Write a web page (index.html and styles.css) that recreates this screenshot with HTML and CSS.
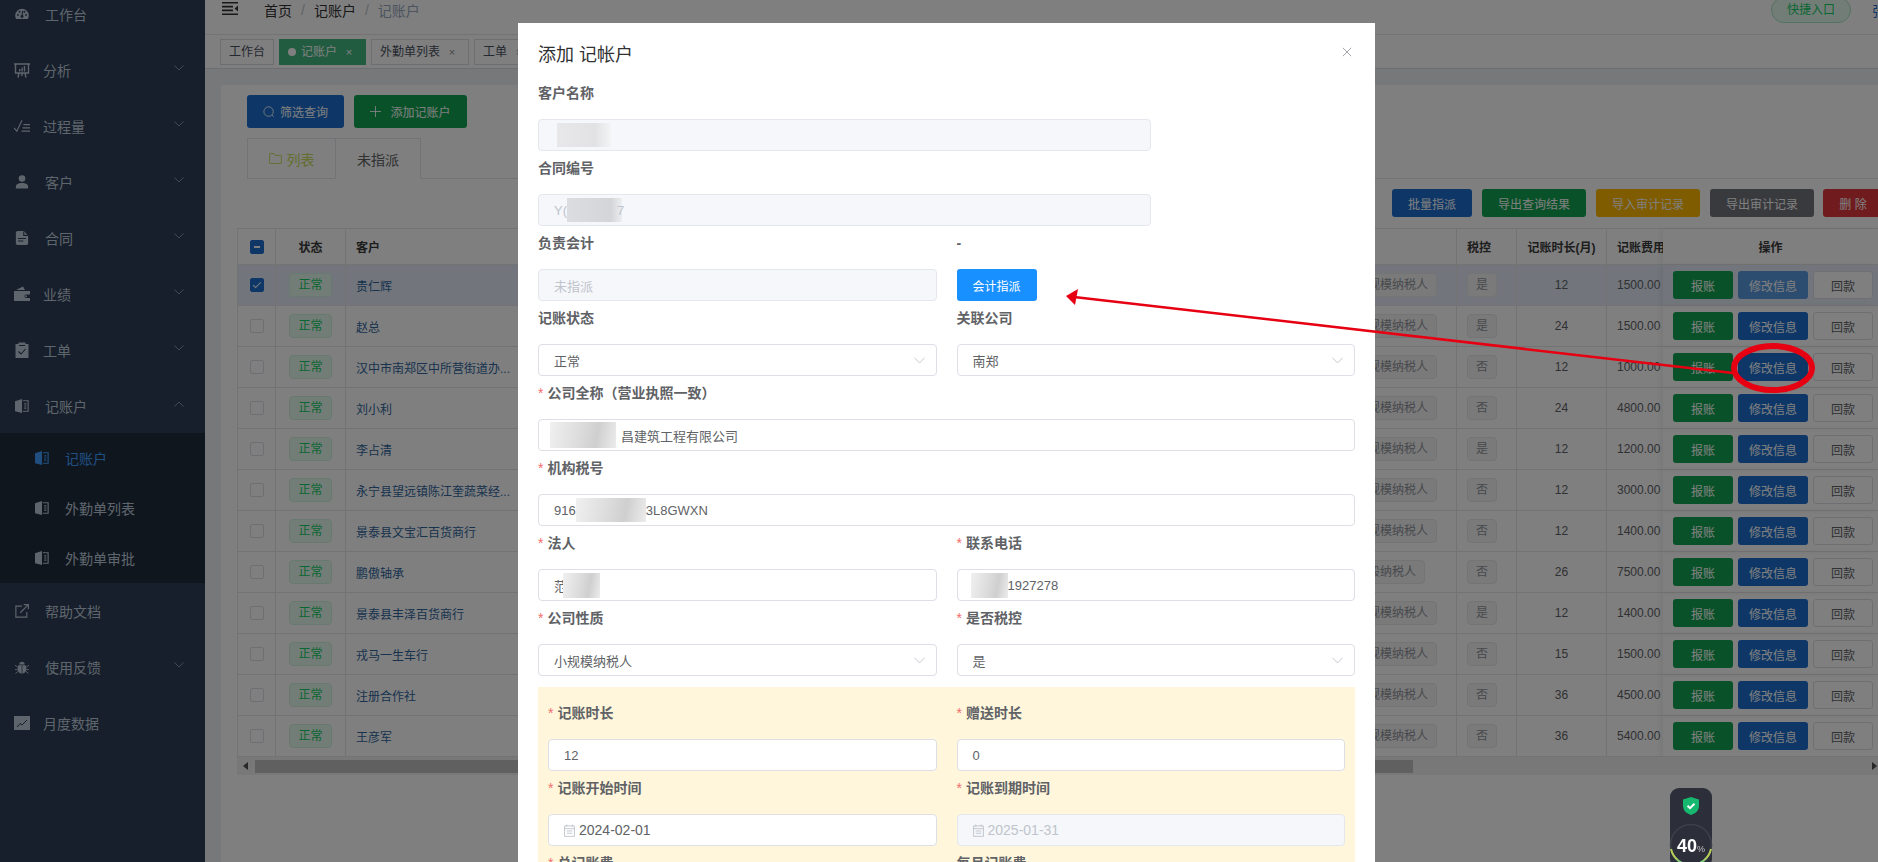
FILE: index.html
```html
<!DOCTYPE html>
<html lang="en">

<head>
    <meta charset="UTF-8">
    <meta name="viewport" content="width=device-width, initial-scale=1.0">
    <title>记账户</title>
    <link rel="stylesheet" href="styles.css">
</head>

<body>

    <!-- Sidebar icons -->
    <svg class="icon-defs" width="0" height="0">
        <symbol id="i-dash" viewBox="0 0 16 16">
            <path fill="currentColor" d="M8 2a7.8 7.8 0 0 0-7.8 7.8c0 1.5.4 2.8 1.1 4h13.4c.7-1.2 1.1-2.5 1.1-4A7.8 7.8 0 0 0 8 2z" />
            <g fill="#2d3e56"><circle cx="3.4" cy="9" r="1.1" /><circle cx="5.2" cy="5.4" r="1.1" /><circle cx="10.8" cy="5.4" r="1.1" /><circle cx="12.6" cy="9" r="1.1" /><circle cx="8" cy="10.8" r="1.7" /></g>
            <path stroke="#2d3e56" stroke-width="1.2" d="M8 10.5 8.8 4.5" />
        </symbol>
        <symbol id="i-board" viewBox="0 0 16 16">
            <g fill="none" stroke="currentColor" stroke-width="1.4"><path d="M0 2h16M1.5 2v9h13V2M5 11l-1 4.5M11 11l1 4.5M8 11v3" /></g>
            <path fill="currentColor" d="M5 7h1.4v2.5H5zM7.4 5.5h1.4v4H7.4zM9.8 4h1.4v5.500H9.8z" />
        </symbol>
        <symbol id="i-check" viewBox="0 1 17 14">
            <path fill="none" stroke="currentColor" stroke-width="1.2" d="M0 10l3 3.500L8.500 2M10 6.500h7M9 10h8M8 13.500h9" />
        </symbol>
        <symbol id="i-user" viewBox="0 0 16 16">
            <circle fill="currentColor" cx="8" cy="4" r="3.800" />
            <path fill="currentColor" d="M1 15.500v-2.500c0-2.500 3-4 7-4s7 1.500 7 4v2.500z" />
        </symbol>
        <symbol id="i-doc" viewBox="0 0 16 16">
            <path fill="currentColor" d="M1 2a2 2 0 0 1 2-2h7l5 5v9a2 2 0 0 1-2 2H3a2 2 0 0 1-2-2z" />
            <path fill="none" stroke="#2d3e56" stroke-width="1.2" d="M3.500 8.500h9M3.500 11.500h6M10 .5V5h5" />
        </symbol>
        <symbol id="i-wallet" viewBox="0 0 16 16">
            <path fill="currentColor" d="M0 5h16v3.500h-4.500a2 2 0 0 0 0 3.500H16V15H0zM2 4l7-3.500L11 4z" />
            <circle fill="currentColor" cx="12" cy="10.300" r="1" />
        </symbol>
        <symbol id="i-clip" viewBox="0 0 16 16">
            <path fill="currentColor" d="M1.500 2h3V.5h7V2h3v14h-13z" />
            <path fill="none" stroke="#2d3e56" stroke-width="1.100" d="M4.500 9.500l2.500 2.500 4.500-5M5 3.500h6" />
        </symbol>
        <symbol id="i-book" viewBox="0 0 16 16">
            <path fill="currentColor" d="M0 2.500 8 0v16l-8-2z" />
            <path fill="none" stroke="currentColor" stroke-width="1.300" d="M9 2h6v12H9M10.500 5.500H13M10.500 8H13M10.500 10.500H13" />
        </symbol>
        <symbol id="i-link" viewBox="0 0 16 16">
            <path fill="none" stroke="currentColor" stroke-width="1.300" d="M8 2.500H1v12.500h12.500V9M6 10 15 1M10 .7h5.300V6" />
        </symbol>
        <symbol id="i-bug" viewBox="0 0 16 16">
            <path fill="currentColor" d="M4 6h8c.8 1 1 2.500 1 4 0 3-2 5.500-5 5.500S3 13 3 10c0-1.500.2-3 1-4zM5 5a3 3 0 0 1 6 0z" />
            <path fill="none" stroke="currentColor" stroke-width="1" d="M0 6l3 2M16 6l-3 2M0 11h3M16 11h-3M.5 15.500 3.500 13M15.500 15.500 12.500 13" />
            <path stroke="#2d3e56" stroke-width=".8" d="M8 6v9.500" />
        </symbol>
        <symbol id="i-chart" viewBox="0 0 16 16">
            <path fill="currentColor" d="M0 1h16v14H0z" />
            <path fill="none" stroke="#2d3e56" stroke-width="1" d="M3 12l3-3.500 2 1.500 5-5" />
        </symbol>
    </svg>

    <div class="app">
        <aside class="sidebar">
            <a class="menu-item"><svg class="menu-icon"><use href="#i-dash" /></svg>工作台</a>
            <a class="menu-item tight"><svg class="menu-icon"><use href="#i-board" /></svg>分析<svg class="chev" viewBox="0 0 10 6"><path d="M.5.5 5 5 9.500.5" /></svg></a>
            <a class="menu-item tight"><svg class="menu-icon"><use href="#i-check" /></svg>过程量<svg class="chev" viewBox="0 0 10 6"><path d="M.5.5 5 5 9.500.5" /></svg></a>
            <a class="menu-item"><svg class="menu-icon"><use href="#i-user" /></svg>客户<svg class="chev" viewBox="0 0 10 6"><path d="M.5.5 5 5 9.500.5" /></svg></a>
            <a class="menu-item"><svg class="menu-icon"><use href="#i-doc" /></svg>合同<svg class="chev" viewBox="0 0 10 6"><path d="M.5.5 5 5 9.500.5" /></svg></a>
            <a class="menu-item tight"><svg class="menu-icon"><use href="#i-wallet" /></svg>业绩<svg class="chev" viewBox="0 0 10 6"><path d="M.5.5 5 5 9.500.5" /></svg></a>
            <a class="menu-item tight"><svg class="menu-icon"><use href="#i-clip" /></svg>工单<svg class="chev" viewBox="0 0 10 6"><path d="M.5.5 5 5 9.500.5" /></svg></a>
            <a class="menu-item"><svg class="menu-icon"><use href="#i-book" /></svg>记账户<svg class="chev" viewBox="0 0 10 6"><path d="M.5 5.500 5 1l4.500 4.500" /></svg></a>
            <div class="submenu">
                <a class="sub-item active"><svg class="menu-icon"><use href="#i-book" /></svg>记账户</a>
                <a class="sub-item"><svg class="menu-icon"><use href="#i-book" /></svg>外勤单列表</a>
                <a class="sub-item"><svg class="menu-icon"><use href="#i-book" /></svg>外勤单审批</a>
            </div>
            <a class="menu-item"><svg class="menu-icon"><use href="#i-link" /></svg>帮助文档</a>
            <a class="menu-item"><svg class="menu-icon"><use href="#i-bug" /></svg>使用反馈<svg class="chev" viewBox="0 0 10 6"><path d="M.5.5 5 5 9.500.5" /></svg></a>
            <a class="menu-item tight"><svg class="menu-icon"><use href="#i-chart" /></svg>月度数据</a>
        </aside>

        <div class="main">
            <header class="navbar">
                <svg class="fold" viewBox="0 0 16 13"><path d="M0 0h16v1.600H0zM0 11.400h16V13H0zM0 3.800h11v1.600H0zM0 7.600h11v1.600H0zM16 3.600v5.800l-3.500-2.900z" /></svg>
                <span class="crumb">首页</span><span class="crumb-sep">/</span>
                <span class="crumb">记账户</span><span class="crumb-sep">/</span>
                <span class="crumb last">记账户</span>
                <span class="quick">快捷入口</span>
                <span class="user-name">张</span>
            </header>

            <div class="tags-bar">
                <span class="tag-view">工作台</span>
                <span class="tag-view current"><i class="dot"></i>记账户<em>×</em></span>
                <span class="tag-view">外勤单列表<em>×</em></span>
                <span class="tag-view">工单<em>×</em></span>
            </div>

            <div class="content">
                <div class="card">
                    <div class="top-btns">
                        <button class="btn blue search"><svg viewBox="0 0 14 14"><circle cx="6.500" cy="6.500" r="5.500" /><path d="M10.500 10.500 12.500 12.500" /></svg>筛选查询</button>
                        <button class="btn green add"><svg viewBox="0 0 12 12"><path d="M6 0v12M0 6h12" /></svg>添加记账户</button>
                    </div>

                    <div class="tabs">
                        <span class="tab list"><svg viewBox="0 0 14 12"><path d="M.6 11.400V.6h4.500l1.500 2h6.800v8.800z" /></svg>列表</span>
                        <span class="tab current">未指派</span>
                    </div>

                    <div class="toolbar">
                        <button class="btn blue">批量指派</button>
                        <button class="btn green">导出查询结果</button>
                        <button class="btn yellow">导入审计记录</button>
                        <button class="btn gray">导出审计记录</button>
                        <button class="btn red">删 除</button>
                    </div>

                    <table class="grid">
                        <colgroup>
                            <col class="c-check"><col class="c-state"><col class="c-name"><col class="c-other">
                            <col class="c-type"><col class="c-tax"><col class="c-months"><col class="c-fee"><col class="c-ops">
                        </colgroup>
                        <thead>
                            <tr>
                                <th class="center"><span class="box mixed"></span></th>
                                <th class="center">状态</th>
                                <th>客户</th>
                                <th></th>
                                <th></th>
                                <th>税控</th>
                                <th class="center">记账时长(月)</th>
                                <th class="fee">记账费用</th>
                                <th class="ops center">操作</th>
                            </tr>
                        </thead>
                        <tbody>
                            <tr class="selected">
                                <td class="center"><span class="box checked"></span></td><td class="center"><span class="tag ok">正常</span></td><td class="name">贵仁辉</td><td></td>
                                <td><span class="tag">小规模纳税人</span></td><td><span class="tag">是</span></td><td class="center">12</td><td class="fee">1500.00</td>
                                <td class="ops"><div class="ops-row"><button class="mini green">报账</button><button class="mini blue focus">修改信息</button><button class="mini plain">回款</button></div></td>
                            </tr>
                            <tr>
                                <td class="center"><span class="box"></span></td><td class="center"><span class="tag ok">正常</span></td><td class="name">赵总</td><td></td>
                                <td><span class="tag">小规模纳税人</span></td><td><span class="tag">是</span></td><td class="center">24</td><td class="fee">1500.00</td>
                                <td class="ops"><div class="ops-row"><button class="mini green">报账</button><button class="mini blue">修改信息</button><button class="mini plain">回款</button></div></td>
                            </tr>
                            <tr>
                                <td class="center"><span class="box"></span></td><td class="center"><span class="tag ok">正常</span></td><td class="name">汉中市南郑区中所营街道办...</td><td></td>
                                <td><span class="tag">小规模纳税人</span></td><td><span class="tag">否</span></td><td class="center">12</td><td class="fee">1000.00</td>
                                <td class="ops"><div class="ops-row"><button class="mini green">报账</button><button class="mini blue">修改信息</button><button class="mini plain">回款</button></div></td>
                            </tr>
                            <tr>
                                <td class="center"><span class="box"></span></td><td class="center"><span class="tag ok">正常</span></td><td class="name">刘小利</td><td></td>
                                <td><span class="tag">小规模纳税人</span></td><td><span class="tag">否</span></td><td class="center">24</td><td class="fee">4800.00</td>
                                <td class="ops"><div class="ops-row"><button class="mini green">报账</button><button class="mini blue">修改信息</button><button class="mini plain">回款</button></div></td>
                            </tr>
                            <tr>
                                <td class="center"><span class="box"></span></td><td class="center"><span class="tag ok">正常</span></td><td class="name">李占清</td><td></td>
                                <td><span class="tag">小规模纳税人</span></td><td><span class="tag">是</span></td><td class="center">12</td><td class="fee">1200.00</td>
                                <td class="ops"><div class="ops-row"><button class="mini green">报账</button><button class="mini blue">修改信息</button><button class="mini plain">回款</button></div></td>
                            </tr>
                            <tr>
                                <td class="center"><span class="box"></span></td><td class="center"><span class="tag ok">正常</span></td><td class="name">永宁县望远镇陈江奎蔬菜经...</td><td></td>
                                <td><span class="tag">小规模纳税人</span></td><td><span class="tag">否</span></td><td class="center">12</td><td class="fee">3000.00</td>
                                <td class="ops"><div class="ops-row"><button class="mini green">报账</button><button class="mini blue">修改信息</button><button class="mini plain">回款</button></div></td>
                            </tr>
                            <tr>
                                <td class="center"><span class="box"></span></td><td class="center"><span class="tag ok">正常</span></td><td class="name">景泰县文宝汇百货商行</td><td></td>
                                <td><span class="tag">小规模纳税人</span></td><td><span class="tag">否</span></td><td class="center">12</td><td class="fee">1400.00</td>
                                <td class="ops"><div class="ops-row"><button class="mini green">报账</button><button class="mini blue">修改信息</button><button class="mini plain">回款</button></div></td>
                            </tr>
                            <tr>
                                <td class="center"><span class="box"></span></td><td class="center"><span class="tag ok">正常</span></td><td class="name">鹏傲轴承</td><td></td>
                                <td><span class="tag">一般纳税人</span></td><td><span class="tag">否</span></td><td class="center">26</td><td class="fee">7500.00</td>
                                <td class="ops"><div class="ops-row"><button class="mini green">报账</button><button class="mini blue">修改信息</button><button class="mini plain">回款</button></div></td>
                            </tr>
                            <tr>
                                <td class="center"><span class="box"></span></td><td class="center"><span class="tag ok">正常</span></td><td class="name">景泰县丰泽百货商行</td><td></td>
                                <td><span class="tag">小规模纳税人</span></td><td><span class="tag">是</span></td><td class="center">12</td><td class="fee">1400.00</td>
                                <td class="ops"><div class="ops-row"><button class="mini green">报账</button><button class="mini blue">修改信息</button><button class="mini plain">回款</button></div></td>
                            </tr>
                            <tr>
                                <td class="center"><span class="box"></span></td><td class="center"><span class="tag ok">正常</span></td><td class="name">戎马一生车行</td><td></td>
                                <td><span class="tag">小规模纳税人</span></td><td><span class="tag">否</span></td><td class="center">15</td><td class="fee">1500.00</td>
                                <td class="ops"><div class="ops-row"><button class="mini green">报账</button><button class="mini blue">修改信息</button><button class="mini plain">回款</button></div></td>
                            </tr>
                            <tr>
                                <td class="center"><span class="box"></span></td><td class="center"><span class="tag ok">正常</span></td><td class="name">注册合作社</td><td></td>
                                <td><span class="tag">小规模纳税人</span></td><td><span class="tag">否</span></td><td class="center">36</td><td class="fee">4500.00</td>
                                <td class="ops"><div class="ops-row"><button class="mini green">报账</button><button class="mini blue">修改信息</button><button class="mini plain">回款</button></div></td>
                            </tr>
                            <tr>
                                <td class="center"><span class="box"></span></td><td class="center"><span class="tag ok">正常</span></td><td class="name">王彦军</td><td></td>
                                <td><span class="tag">小规模纳税人</span></td><td><span class="tag">否</span></td><td class="center">36</td><td class="fee">5400.00</td>
                                <td class="ops"><div class="ops-row"><button class="mini green">报账</button><button class="mini blue">修改信息</button><button class="mini plain">回款</button></div></td>
                            </tr>
                        </tbody>
                    </table>

                    <div class="scrollbar">
                        <i class="arrow left"></i>
                        <div class="thumb"></div>
                        <i class="arrow right"></i>
                    </div>
                </div>
            </div>
        </div>
    </div>

    <!-- Dialog layer -->
    <div class="mask"></div>

    <div class="dialog">
        <div class="dialog-title">添加 记帐户</div>
        <svg class="dialog-close" viewBox="0 0 12 12"><path d="M1 1l10 10M11 1 1 11" /></svg>

        <div class="field wide">
            <label>客户名称</label>
            <div class="input disabled"><span class="blur b-name"></span></div>
        </div>
        <div class="field wide">
            <label>合同编号</label>
            <div class="input disabled">Y(<span class="blur b-contract"></span>7</div>
        </div>

        <div class="form-row">
            <div class="field">
                <label>负责会计</label>
                <div class="input disabled">未指派</div>
            </div>
            <div class="field">
                <label>-</label>
                <button class="assign">会计指派</button>
            </div>
            <div class="field">
                <label>记账状态</label>
                <div class="input select">正常<svg class="caret" viewBox="0 0 12 7"><path d="M.5.5 6 6.200 11.500.5" /></svg></div>
            </div>
            <div class="field">
                <label>关联公司</label>
                <div class="input select">南郑<svg class="caret" viewBox="0 0 12 7"><path d="M.5.5 6 6.200 11.500.5" /></svg></div>
            </div>
        </div>

        <div class="field">
            <label class="req">公司全称（营业执照一致）</label>
            <div class="input"><span class="blur b-company"></span>昌建筑工程有限公司</div>
        </div>
        <div class="field">
            <label class="req">机构税号</label>
            <div class="input">916<span class="blur b-taxno"></span>3L8GWXN</div>
        </div>

        <div class="form-row">
            <div class="field">
                <label class="req">法人</label>
                <div class="input">范<span class="blur b-person"></span></div>
            </div>
            <div class="field">
                <label class="req">联系电话</label>
                <div class="input"><span class="blur b-phone"></span>1927278</div>
            </div>
            <div class="field">
                <label class="req">公司性质</label>
                <div class="input select">小规模纳税人<svg class="caret" viewBox="0 0 12 7"><path d="M.5.5 6 6.200 11.500.5" /></svg></div>
            </div>
            <div class="field">
                <label class="req">是否税控</label>
                <div class="input select">是<svg class="caret" viewBox="0 0 12 7"><path d="M.5.5 6 6.200 11.500.5" /></svg></div>
            </div>
        </div>

        <div class="fee-box">
            <div class="form-row">
                <div class="field">
                    <label class="req">记账时长</label>
                    <div class="input">12</div>
                </div>
                <div class="field">
                    <label class="req">赠送时长</label>
                    <div class="input">0</div>
                </div>
                <div class="field">
                    <label class="req">记账开始时间</label>
                    <div class="input date"><svg class="cal" viewBox="0 0 12 14"><path d="M.6 2h10.800v11.400H.6zM3 .5V3M9 .5V3M.6 5h10.800M3 7.500h6M3 10h6" /></svg>2024-02-01</div>
                </div>
                <div class="field">
                    <label class="req">记账到期时间</label>
                    <div class="input date disabled"><svg class="cal" viewBox="0 0 12 14"><path d="M.6 2h10.800v11.400H.6zM3 .5V3M9 .5V3M.6 5h10.800M3 7.500h6M3 10h6" /></svg>2025-01-31</div>
                </div>
                <div class="field">
                    <label class="req">总记账费</label>
                </div>
                <div class="field">
                    <label>每月记账费</label>
                </div>
            </div>
        </div>
    </div>

    <!-- Red annotation drawn over the screenshot -->
    <svg class="annotation" viewBox="0 0 1878 862">
        <path d="M1733 373 1074 297" stroke="#e60012" stroke-width="2.500" fill="none" />
        <path d="M1066 296 1078 289 1075 305z" fill="#e60012" />
        <ellipse cx="1773" cy="368" rx="39" ry="22" stroke="#e60012" stroke-width="6" fill="none" />
    </svg>

    <!-- Floating security widget -->
    <div class="widget">
        <svg class="shield" viewBox="0 0 16 18">
            <path fill="#16b86f" d="M8 0 16 2.500V9c0 4.500-3.500 7.500-8 9-4.500-1.500-8-4.500-8-9V2.500z" />
            <path fill="none" stroke="#fff" stroke-width="2" d="M4.500 8.800 7 11.200 11.500 6.800" />
        </svg>
        <div class="gauge">
            <svg viewBox="0 0 44 44">
                <defs>
                    <linearGradient id="gaugeArc" x1="0" y1="0" x2="0" y2="1">
                        <stop offset="0.55" stop-color="#b7cf5a" />
                        <stop offset="1" stop-color="#3fc6a0" />
                    </linearGradient>
                </defs>
                <circle cx="22" cy="22" r="20.500" fill="none" stroke="#3d3f49" stroke-width="1.500" />
                <path d="M2 26A20.500 20.500 0 0 0 42 26" fill="none" stroke="url(#gaugeArc)" stroke-width="2" />
            </svg>
            <span class="gauge-text">40<small>%</small></span>
        </div>
    </div>

</body>

</html>
```

FILE: styles.css
```css
* {
    margin: 0;
    padding: 0;
    box-sizing: border-box;
}

body {
    height: 862px;
    overflow: hidden;
    font-family: "Liberation Sans", "Noto Sans CJK SC", sans-serif;
    font-size: 14px;
    color: #606266;
    background-color: #fff;
}

.icon-defs {
    position: absolute;
}

button {
    font-family: inherit;
    border: 0;
}

/* page is scrolled a little in the shot, so everything starts above the top edge */
.app {
    display: flex;
    height: 876px;
    margin-top: -14px;
}

/* Sidebar */
.sidebar {
    flex: none;
    width: 205px;
    background-color: #2d3e56;
    color: #bfcbd9;
}

.menu-item {
    display: flex;
    align-items: center;
    height: 56px;
    padding-left: 15px;
}

.menu-icon {
    flex: none;
    width: 14px;
    height: 14px;
    margin-right: 16px;
}

.menu-item.tight .menu-icon {
    width: 16px;
    height: 16px;
    margin-left: -1px;
    margin-right: 13px;
}

.chev {
    width: 10px;
    height: 6px;
    margin: -4px 21px 0 auto;
    fill: none;
    stroke: #8793a3;
    stroke-width: 1;
}

.submenu {
    margin-top: -1px;
    background-color: #1f2d3d;
}

.sub-item {
    display: flex;
    align-items: center;
    height: 50px;
    padding-left: 35px;
}

.sub-item.active {
    color: #409eff;
}

/* Main column */
.main {
    flex: 1;
    min-width: 0;
    overflow: hidden;
}

.navbar {
    display: flex;
    align-items: center;
    height: 49px;
    padding-left: 17px;
    border-bottom: 1px solid #e6e6e6;
}

.fold {
    width: 16px;
    height: 13px;
    margin: -4px 26px 0 0;
    fill: #303133;
}

.crumb {
    color: #303133;
}

.crumb.last {
    color: #97a8be;
}

.crumb-sep {
    margin: 0 9px;
    color: #c0c4cc;
}

.quick {
    width: 80px;
    height: 26px;
    margin: 0 21px 0 auto;
    border: 1px solid #a5e6c3;
    border-radius: 13px;
    background-color: #e7faf0;
    color: #13ce66;
    font-size: 12px;
    line-height: 24px;
    text-align: center;
}

.user-name {
    flex: none;
    width: 6px;
    overflow: hidden;
    color: #1c6fd0;
}

.tags-bar {
    display: flex;
    gap: 5px;
    height: 34px;
    padding: 4px 0 0 15px;
    border-bottom: 1px solid #d8dce5;
}

.tag-view {
    height: 26px;
    padding: 0 8px;
    border: 1px solid #d8dce5;
    font-size: 12px;
    line-height: 24px;
    color: #495060;
}

.tag-view em {
    display: inline-block;
    width: 16px;
    margin-left: 4px;
    font-style: normal;
    font-size: 11px;
    text-align: center;
    color: #909399;
}

.tag-view.current {
    border-color: #42b983;
    background-color: #42b983;
    color: #fff;
}

.tag-view.current em {
    color: #fff;
}

.dot {
    display: inline-block;
    width: 8px;
    height: 8px;
    margin-right: 5px;
    border-radius: 50%;
    background-color: #fff;
}

.content {
    height: 793px;
    padding: 16px 0 0 16px;
    background-color: #eef0f3;
}

.card {
    height: 100%;
    padding: 10px 0 0 26px;
    overflow: hidden;
    background-color: #fff;
}

/* Buttons */
.btn {
    flex: none;
    height: 28px;
    border-radius: 3px;
    font-size: 12px;
    color: #fff;
}

.blue {
    background-color: #1c6fd0;
}

.green {
    background-color: #13a553;
}

.yellow {
    background-color: #ffb800;
}

.gray {
    background-color: #72757d;
}

.red {
    background-color: #e0393e;
}

.top-btns {
    display: flex;
    gap: 10px;
}

.top-btns .btn {
    display: flex;
    align-items: center;
    justify-content: center;
    height: 33px;
}

.search {
    width: 97px;
}

.search svg {
    width: 12px;
    height: 12px;
    margin-right: 5px;
    fill: none;
    stroke: #fff;
}

.add {
    width: 113px;
}

.add svg {
    width: 11px;
    height: 11px;
    margin-right: 9px;
    fill: none;
    stroke: #fff;
}

.tabs {
    display: flex;
    height: 41px;
    margin: 10px 0 0;
    border-bottom: 1px solid #e4e7ed;
}

.tab {
    display: flex;
    align-items: center;
    justify-content: center;
    height: 41px;
    border: 1px solid #e4e7ed;
    color: #606266;
}

.tab.list {
    width: 88px;
    color: #c9dc5c;
    border-right: 0;
}

.tab.list svg {
    width: 13px;
    height: 11px;
    margin-right: 5px;
    fill: none;
    stroke: #c9dc5c;
}

.tab.current {
    width: 86px;
    border-bottom-color: #fff;
}

.toolbar {
    display: flex;
    justify-content: flex-end;
    gap: 10px;
    margin: 10px -5px 0 0;
}

.toolbar .blue {
    width: 80px;
}

.toolbar .green,
.toolbar .yellow,
.toolbar .gray {
    width: 104px;
}

.toolbar .red {
    width: 60px;
    margin-left: -1px;
}

/* Table */
.grid {
    width: 1641px;
    margin: 11px 0 0 -10px;
    border-collapse: separate;
    border-spacing: 0;
    border-top: 1px solid #e6e6e6;
    border-left: 1px solid #e6e6e6;
    table-layout: fixed;
    font-size: 12px;
}

.c-check { width: 38px; }
.c-state { width: 70px; }
.c-name { width: 176px; }
.c-other { width: 815px; }
.c-type { width: 120px; }
.c-tax { width: 60px; }
.c-months { width: 90px; }
.c-fee { width: 56px; }
.c-ops { width: 215px; }

.grid th,
.grid td {
    padding: 0 0 0 10px;
    border-right: 1px solid #e6e6e6;
    border-bottom: 1px solid #e6e6e6;
    overflow: hidden;
    white-space: nowrap;
    text-align: left;
}

.grid th {
    height: 36px;
    color: #3a3a3a;
    font-weight: 700;
}

.grid td {
    height: 41px;
    color: #606266;
}

.grid .center {
    padding-left: 0;
    text-align: center;
}

.grid .fee {
    border-right: 0;
}

.grid .ops {
    border-right: 0;
    box-shadow: -3px 0 6px rgba(0, 0, 0, 0.06);
}

.grid td.name {
    color: #30659c;
}

.selected td {
    background-color: #e4edf8;
}

.box {
    display: inline-block;
    position: relative;
    width: 14px;
    height: 14px;
    border: 1px solid #dcdfe6;
    border-radius: 2px;
    vertical-align: middle;
    background-color: #fff;
}

.box.mixed,
.box.checked {
    border-color: #1c6fd0;
    background-color: #1c6fd0;
}

.box.mixed::after {
    content: "";
    position: absolute;
    left: 3px;
    top: 5px;
    width: 6px;
    height: 2px;
    background-color: #fff;
}

.box.checked::after {
    content: "";
    position: absolute;
    left: 4px;
    top: 1px;
    width: 3px;
    height: 7px;
    border: 1px solid #fff;
    border-width: 0 1px 1px 0;
    transform: rotate(45deg);
}

.tag {
    display: inline-block;
    height: 24px;
    padding: 0 8px;
    border: 1px solid #e9e9eb;
    border-radius: 4px;
    background-color: #f4f4f5;
    color: #909399;
    line-height: 22px;
}

.tag.ok {
    border-color: #d0f5e0;
    background-color: #e7faf0;
    color: #13ce66;
}

.ops-row {
    display: flex;
    gap: 5px;
}

.mini {
    flex: none;
    width: 60px;
    height: 28px;
    border-radius: 3px;
    font-size: 12px;
    color: #fff;
}

.mini.blue {
    width: 70px;
}

.mini.focus {
    background-color: #5a9ae0;
}

.mini.plain {
    border: 1px solid #dcdfe6;
    background-color: #fff;
    color: #606266;
}

.scrollbar {
    display: flex;
    align-items: center;
    width: 1641px;
    height: 18px;
    margin-left: -10px;
    background-color: #f1f1f1;
}

.thumb {
    width: 1158px;
    height: 13px;
    margin-left: 7px;
    background-color: #c1c1c1;
}

.arrow {
    width: 0;
    height: 0;
    border: 4px solid transparent;
}

.arrow.left {
    margin-left: 6px;
    border-left: 0;
    border-right: 5px solid #505050;
}

.arrow.right {
    margin-left: auto;
    margin-right: 1px;
    border-right: 0;
    border-left: 5px solid #505050;
}

/* Dialog */
.mask {
    position: fixed;
    top: 0;
    left: 0;
    width: 100%;
    height: 100%;
    background-color: rgba(0, 0, 0, 0.5);
}

.dialog {
    position: fixed;
    top: 23px;
    left: 518px;
    width: 857px;
    height: 839px;
    padding: 20px 20px 0;
    overflow: hidden;
    background-color: #fff;
}

.dialog-title {
    height: 24px;
    margin-bottom: 13px;
    font-size: 18px;
    line-height: 24px;
    color: #303133;
}

.dialog-close {
    position: absolute;
    top: 24px;
    right: 23px;
    width: 10px;
    height: 10px;
    fill: none;
    stroke: #909399;
}

.field {
    min-width: 0;
    margin-bottom: 4px;
}

.field.wide {
    width: 75%;
}

.field label {
    display: block;
    height: 26px;
    margin-bottom: 13px;
    font-weight: 700;
    line-height: 26px;
}

.field label.req::before {
    content: "*";
    margin-right: 4px;
    color: #f56c6c;
    font-weight: 400;
}

.form-row {
    display: grid;
    grid-template-columns: 1fr 1fr;
    column-gap: 20px;
}

.input {
    display: flex;
    align-items: center;
    height: 32px;
    padding: 0 15px;
    border: 1px solid #dcdfe6;
    border-radius: 4px;
    background-color: #fff;
    font-size: 13px;
    white-space: nowrap;
}

.input.date {
    font-size: 14px;
}

.input.disabled {
    background-color: #f5f7fa;
    border-color: #e4e7ed;
    color: #c0c4cc;
}

.input.select {
    justify-content: space-between;
    padding-right: 11px;
}

.caret {
    width: 11px;
    height: 7px;
    fill: none;
    stroke: #c0c4cc;
}

.cal {
    flex: none;
    width: 11px;
    height: 13px;
    margin-right: 4px;
    fill: none;
    stroke: #c0c4cc;
}

.assign {
    display: block;
    width: 80px;
    height: 32px;
    border-radius: 3px;
    background-color: #1890ff;
    color: #fff;
    font-size: 12px;
}

.fee-box {
    margin-top: 7px;
    padding: 13px 10px 0;
    background-color: #fff6dc;
}

/* Smudged-out text from the original shot */
.blur {
    flex: none;
    background: linear-gradient(100deg, #f0f0f0 0%, #dcdcdc 45%, #cfcfcf 70%, #ececec 100%);
}

.b-name {
    width: 54px;
    height: 24px;
    margin-left: 3px;
    background: linear-gradient(90deg, #e8e8ea 0%, #e2e2e5 70%, #f3f4f6 100%);
}

.b-contract {
    width: 55px;
    height: 24px;
    margin-right: -5px;
    background: linear-gradient(90deg, #dcdde0 0%, #d4d5d8 80%, #eceef0 100%);
}

.b-company {
    width: 66px;
    height: 26px;
    margin: 0 5px 0 -4px;
}

.b-taxno {
    width: 70px;
    height: 24px;
}

.b-person {
    width: 37px;
    height: 25px;
    margin-left: -4px;
}

.b-phone {
    width: 37px;
    height: 25px;
    margin-left: -2px;
}

/* Annotation and floating widget sit over the dialog */
.annotation {
    position: fixed;
    top: 0;
    left: 0;
    width: 1878px;
    height: 862px;
    pointer-events: none;
}

.widget {
    position: fixed;
    top: 788px;
    left: 1670px;
    width: 42px;
    height: 80px;
    border-radius: 9px;
    background-color: #2c2e39;
}

.shield {
    display: block;
    width: 16px;
    height: 18px;
    margin: 9px auto 0;
}

.gauge {
    position: absolute;
    top: 35px;
    left: -1px;
    width: 44px;
    height: 44px;
}

.gauge svg {
    display: block;
    width: 44px;
    height: 44px;
}

.gauge-text {
    position: absolute;
    top: 13px;
    left: 0;
    width: 100%;
    text-align: center;
    font-size: 18px;
    font-weight: 700;
    color: #fff;
    line-height: 20px;
}

.gauge-text small {
    font-size: 9px;
    font-weight: 400;
    color: #c8c8c8;
}
```
